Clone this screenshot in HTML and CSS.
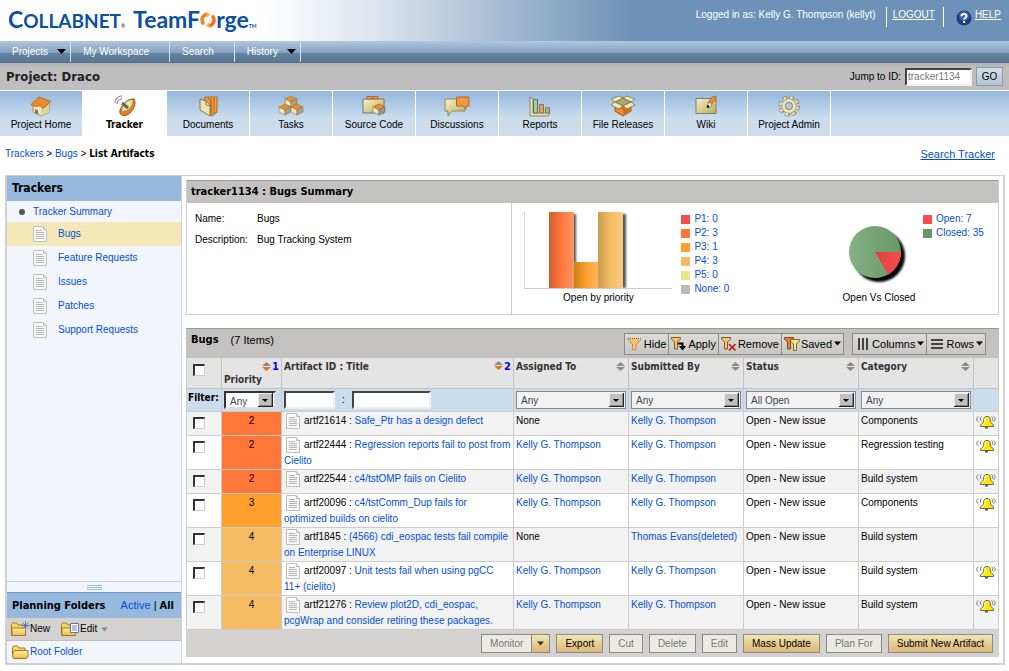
FILE: index.html
```html
<!DOCTYPE html>
<html lang="en">
<head>
<meta charset="utf-8">
<title>TeamForge: List Artifacts</title>
<link rel="stylesheet" href="styles.css">
</head>
<body>
<svg class="defs" width="0" height="0" aria-hidden="true">
  <defs>
    <linearGradient id="cream" x1="0" y1="0" x2="1" y2="1"><stop offset="0" stop-color="#f6f0c4"/><stop offset="1" stop-color="#b9ad62"/></linearGradient>
    <linearGradient id="gold" x1="0" y1="0" x2="0" y2="1"><stop offset="0" stop-color="#fff3a8"/><stop offset="1" stop-color="#eab94a"/></linearGradient>
    <symbol id="doc" viewBox="0 0 15 16">
      <path d="M.5.5h10l3 3v12H.5z" fill="#fafafa" stroke="#bdbdbd"/>
      <path d="M10.500.5v3h3" fill="#e8e8e8" stroke="#bdbdbd"/>
      <path d="M3 4.500h6M3 6.500h8M3 8.500h8M3 10.500h8M3 12.500h8" stroke="#b4b4b4"/>
    </symbol>
    <symbol id="bell" viewBox="0 0 20 14">
      <path d="M8 3 9.500 1.500h3L14 3l.5 4 3 3v1.500h-13V10l3-3z" fill="#ffe600" stroke="#6c6a58"/>
      <path d="M9 3v4.500l-3 3" fill="none" stroke="#fff"/>
      <path d="M9 12h3v1.500H9z" fill="#555"/>
      <path d="M2.500 7C0 5.500.2 3 2.500 1.500M5.500 6C4 5 4 3 5.500 1.500M17.500 7c2.300-2 2.100-4 0-5.500M16 6c1.300-1.500 1-3-.5-4.500" fill="none" stroke="#777"/>
    </symbol>
    <symbol id="sort" viewBox="0 0 9 9"><path d="M4.500 0 9 4H0z" fill="#8c8c8c"/><path d="M4.500 9 9 5H0z" fill="#8c8c8c"/></symbol>
    <symbol id="sorted" viewBox="0 0 9 9"><path d="M4.500 0 9 4H0z" fill="#8c8c8c"/><path d="M4.500 9 9 5H0z" fill="#e07818"/></symbol>
    <symbol id="down" viewBox="0 0 9 5"><path d="M0 0h9L4.500 5z" fill="currentColor"/></symbol>
  </defs>
</svg>

<header class="banner">
  <div class="logo" aria-label="CollabNet TeamForge">
    <span class="logo-collab"><span class="logo-cap">C</span>OLLABNET</span><span class="logo-mark">®</span>
    <span class="logo-forge">TeamF</span><svg class="logo-ring" viewBox="0 0 16 16"><path d="M7 2.200A5.800 5.800 0 0 0 4 12.300" fill="none" stroke="#f58220" stroke-width="3.400"/><path d="M9 13.800A5.800 5.800 0 0 0 12 3.700" fill="none" stroke="#f36f21" stroke-width="3.400"/><path d="M6.500 0 10.500 2.500 7 5.800zM9.500 16 5.500 13.500 9 10.200z" fill="#fdb63a"/></svg><span class="logo-forge">rge</span><span class="logo-mark">TM</span>
  </div>
  <div class="account">
    <span class="who">Logged in as: Kelly G. Thompson (kellyt)</span>
    <a class="logout" href="#">LOGOUT</a>
    <svg class="help-icon" viewBox="0 0 16 16"><circle cx="8" cy="8" r="7.500" fill="#1d3c80"/><circle cx="8" cy="6" r="5" fill="#3d62a8"/><path d="M5.500 6.200C5.500 3.300 10.600 3.300 10.600 6 10.600 7.800 8.100 7.700 8.100 9.600M8.100 11v2" fill="none" stroke="#fff" stroke-width="2"/></svg>
    <a href="#">HELP</a>
  </div>
</header>

<nav class="menu" aria-label="Site">
  <a class="has-menu" href="#">Projects <svg><use href="#down"/></svg></a>
  <a href="#">My Workspace</a>
  <a href="#">Search</a>
  <a class="has-menu" href="#">History <svg><use href="#down"/></svg></a>
</nav>

<div class="project-bar">
  <h1>Project: Draco</h1>
  <form class="jump">
    <label for="jump">Jump to ID:</label>
    <input id="jump" class="field" type="text" placeholder="tracker1134">
    <button type="button">GO</button>
  </form>
</div>

<nav class="tabs" aria-label="Project">
  <a href="#"><svg viewBox="0 0 22 22"><path d="M3 9v8l8 4 8-4V9L11 6z" fill="#f1e8b4" stroke="#a08a58"/><path d="M11 12v9l8-4V9z" fill="#ded49a"/><path d="M1 9.500 9 2l12 4.500-8 7-3-3-4 1z" fill="#f08a2c" stroke="#a96a2c"/><path d="M5 14l3 1.500v4L5 18z" fill="#777"/></svg>Project Home</a>
  <a class="current" href="#"><svg viewBox="0 0 22 22"><path d="M6 15C9 8 15 3 20 4c3 4-1 13-7 16-5 2-8-1-7-5z" fill="#e88024" stroke="#955018"/><path d="M7 17C8 9 15 3 19 5c1 5-4 12-12 12z" fill="#efe3a4" stroke="#b77a38"/><path d="M8 8l6 5" stroke="#666" stroke-width="3"/><path d="M1 8c0-4 3-7 7-7M3 9c0-3 2-5 5-5" fill="none" stroke="#777"/></svg>Tracker</a>
  <a href="#"><svg viewBox="0 0 22 22"><path d="M8 2h12v15l-5 4-9-6z" fill="#f39a42" stroke="#b0681f"/><path d="M17 3v16M14 3v17M11 3l3 4v12" stroke="#b0681f" fill="none"/><path d="M3 4l6 2 4 4v11L3 15z" fill="#ece4ae" stroke="#7e7a60"/><path d="M9 6v4l4 1" fill="none" stroke="#7e7a60"/></svg>Documents</a>
  <a href="#"><svg class="wide" viewBox="0 0 26 22"><g stroke="#8e7448" stroke-width=".6"><g id="box"><path d="M7 4l6-3 6 3-6 3z" fill="#f08a2c"/><path d="M7 4v5l6 3V7z" fill="#f1e8b4"/><path d="M19 4v5l-6 3V7z" fill="#aaa08a"/></g><use href="#box" x="-6" y="8"/><use href="#box" x="6" y="8"/></g></svg>Tasks</a>
  <a href="#"><svg class="wide" viewBox="0 0 26 22"><path d="M2 4h21v14H2z" fill="url(#cream)" stroke="#77776a"/><path d="M6 1.500h5V4H6zM12 1.500h5V4h-5z" fill="#f39a42" stroke="#a56a30"/><path d="M12 12l6-3 6 3-6 3z" fill="#f08a2c" stroke="#955018" stroke-width=".6"/><path d="M12 12v5l6 3v-5z" fill="#f1e8b4" stroke="#777" stroke-width=".6"/><path d="M24 12v5l-6 3v-5z" fill="#999" stroke="#666" stroke-width=".6"/></svg>Source Code</a>
  <a href="#"><svg class="wide" viewBox="0 0 26 22"><path d="M1 4h20v12H8l-4 5v-5H1z" fill="url(#cream)" stroke="#8a8668"/><path d="M12.500 2H25v9h-3v3l-3-3h-6.500z" fill="#f5943c" stroke="#a8692e"/></svg>Discussions</a>
  <a href="#"><svg viewBox="0 0 22 22"><path d="M1 2l3 2v14h17l-2 3H1z" fill="#ece4ae" stroke="#8a8668"/><path d="M4.500 4.500h4V18h-4z" fill="#a8d08a" stroke="#666"/><path d="M10.500 9.500h4V18h-4z" fill="#f09a42" stroke="#777"/><path d="M16.500 12.500h4V18h-4z" fill="#b9b36a" stroke="#777"/></svg>Reports</a>
  <a href="#"><svg class="wide" viewBox="0 0 26 22"><path d="M5 9l8 4 8-4v7l-8 5-8-5z" fill="#f08a2c" stroke="#955018"/><path d="M13 13v8l8-5V9z" fill="#d96f18"/><path d="M5 7l8-4 8 4-8 4z" fill="#b0a868" stroke="#77714a"/><path d="M5 7L1 4l8-3 4 2zM13 3l4-2 8 3-4 3zM5 7l8 4-4 3-8-4zM21 7l4 3-8 4-4-3z" fill="#f1e8b4" stroke="#77714a" stroke-width=".8"/></svg>File Releases</a>
  <a href="#"><svg viewBox="0 0 22 22"><path d="M1 3.500h20v15H1z" fill="url(#cream)" stroke="#7e7e70"/><path d="M13 8l4-6 4-1v3l-5 6z" fill="#f08a2c" stroke="#8a5020" stroke-width=".6"/><path d="M12 11l2-4 3 2-1 3-3 1z" fill="#eee" stroke="#555" stroke-width=".6"/><circle cx="13" cy="11.500" r="1.300"/></svg>Wiki</a>
  <a href="#"><svg viewBox="0 0 22 22"><circle cx="12" cy="11" r="8.500" fill="none" stroke="#d97c24" stroke-width="3" stroke-dasharray="3.800 2.880"/><circle cx="11" cy="11" r="8.500" fill="none" stroke="#888" stroke-width="4" stroke-dasharray="4.200 2.480"/><circle cx="11" cy="11" r="8.500" fill="none" stroke="#efe5b0" stroke-width="2.600" stroke-dasharray="2.800 3.880" stroke-dashoffset="-.7"/><circle cx="11" cy="11" r="5.200" fill="none" stroke="#888" stroke-width="4.600"/><circle cx="11" cy="11" r="5.400" fill="none" stroke="#efe5b0" stroke-width="3"/></svg>Project Admin</a>
</nav>

<div class="crumb-row">
  <div class="crumbs"><a href="#">Trackers</a> &gt; <a href="#">Bugs</a> &gt; <b>List Artifacts</b></div>
  <a class="search-link" href="#">Search Tracker</a>
</div>

<main class="frame">
  <aside class="sidebar">
    <h2 class="trackers">Trackers</h2>
    <ul class="tree">
      <li class="root"><a href="#">Tracker Summary</a></li>
      <li class="selected"><svg><use href="#doc"/></svg><a href="#">Bugs</a></li>
      <li><svg><use href="#doc"/></svg><a href="#">Feature Requests</a></li>
      <li><svg><use href="#doc"/></svg><a href="#">Issues</a></li>
      <li><svg><use href="#doc"/></svg><a href="#">Patches</a></li>
      <li><svg><use href="#doc"/></svg><a href="#">Support Requests</a></li>
    </ul>
    <div class="splitter"><span class="grip"></span></div>
    <div class="planning-head"><h2>Planning Folders</h2><span class="scope"><a href="#">Active</a> | <b>All</b></span></div>
    <div class="planning-tools">
      <button type="button"><svg class="folder" viewBox="0 0 19 16"><path d="M.500 14.500v-11l1-1.500h4l1.500 2h7v10.500z" fill="#f5d468" stroke="#a87818"/><path d="M1 14.500V7h13.500v7.500z" fill="url(#gold)" stroke="#a87818"/><path d="M14.500 0v9M10 4.500h9M11.500 1.500l6 6M17.500 1.500l-6 6" stroke="#5a74b8" stroke-width=".9"/></svg>New</button>
      <button type="button"><svg class="folder" viewBox="0 0 19 16"><path d="M.500 14.500v-11l1-1.500h4l1.500 2h7v10.500z" fill="#f5d468" stroke="#a87818"/><path d="M1 14.500V7h13.500v7.500z" fill="url(#gold)" stroke="#a87818"/><path d="M9.500 2.500h8v9h-8z" fill="#fff" stroke="#5a74b8"/><path d="M11 5h5M11 7h5M11 9h5" stroke="#5a74b8" stroke-width=".9"/></svg>Edit<svg class="caret"><use href="#down"/></svg></button>
    </div>
    <div class="planning-root"><svg class="folder" viewBox="0 0 17 14"><path d="M.500 11.500v-9l1-1.500h4l1.500 2h6v2.500" fill="#f5d468" stroke="#a87818"/><path d="M1.500 13.500C0 12 .500 6 3 5.500h13v6l-1.500 2z" fill="url(#gold)" stroke="#a87818"/></svg><a href="#">Root Folder</a></div>
  </aside>

  <section class="content">
    <section class="summary">
      <h2>tracker1134 : Bugs Summary</h2>
      <div class="summary-body">
        <dl class="facts">
          <dt>Name:</dt><dd>Bugs</dd>
          <dt>Description:</dt><dd>Bug Tracking System</dd>
        </dl>
        <div class="charts">
          <figure class="bars">
            <svg viewBox="0 0 148 80">
              <defs>
                <linearGradient id="p2"><stop offset="0" stop-color="#cf5f2f"/><stop offset=".5" stop-color="#ff7738"/><stop offset="1" stop-color="#ff9568"/></linearGradient>
                <linearGradient id="p3"><stop offset="0" stop-color="#c98018"/><stop offset=".5" stop-color="#ffa02c"/><stop offset="1" stop-color="#ffb45c"/></linearGradient>
                <linearGradient id="p4"><stop offset="0" stop-color="#c99c50"/><stop offset=".5" stop-color="#f6bc64"/><stop offset="1" stop-color="#f8ca84"/></linearGradient>
                <filter id="soft" x="-30%" y="-30%" width="160%" height="160%"><feGaussianBlur stdDeviation="1"/></filter>
              </defs>
              <path d="M.500 3v76" stroke="#bbb" stroke-dasharray="1 1"/>
              <path d="M27 5h25v74H27zM76 5h26v74H76z" fill="#555" filter="url(#soft)"/>
              <path d="M50 53h24v26H50z" fill="url(#p3)"/><path d="M25 3h25v76H25z" fill="url(#p2)"/><path d="M74 3h25v76H74z" fill="url(#p4)"/>
              <path d="M0 79.500h148" stroke="#ccc"/>
            </svg>
            <figcaption>Open by priority</figcaption>
          </figure>
          <ul class="legend">
            <li class="k1"><a href="#">P1: 0</a></li><li class="k2"><a href="#">P2: 3</a></li><li class="k3"><a href="#">P3: 1</a></li><li class="k4"><a href="#">P4: 3</a></li><li class="k5"><a href="#">P5: 0</a></li><li class="k0"><a href="#">None: 0</a></li>
          </ul>
          <figure class="pie">
            <svg viewBox="0 0 80 80">
              <defs>
                <linearGradient id="closed"><stop offset="0" stop-color="#85b085"/><stop offset="1" stop-color="#669866"/></linearGradient>
                <linearGradient id="open"><stop offset="0" stop-color="#e04040"/><stop offset="1" stop-color="#fb4c4c"/></linearGradient>
              </defs>
              <circle cx="40" cy="47" r="26" filter="url(#soft)"/>
              <circle cx="36" cy="43" r="26" fill="url(#closed)"/>
              <path d="M36 43h26a26 26 0 0 1-13 22.500z" fill="url(#open)"/>
            </svg>
            <figcaption>Open Vs Closed</figcaption>
          </figure>
          <ul class="legend last"><li class="k1"><a href="#">Open: 7</a></li><li class="kc"><a href="#">Closed: 35</a></li></ul>
        </div>
      </div>
    </section>

    <section class="list">
      <div class="list-head">
        <h2>Bugs</h2><span class="count">(7 Items)</span>
        <div class="tool-group">
          <button type="button"><svg viewBox="0 0 16 14"><path d="M1 1.500h12.500v1.500l-4.500 4v6h-3.500v-6l-4.500-4z" fill="#fbc46c" stroke="#7a5a30" stroke-dasharray="1 1"/></svg>Hide</button>
          <button type="button"><svg viewBox="0 0 16 14"><path d="M.500.500h9v1.500l-3 3v7h-3v-7l-3-3z" fill="#fbc46c" stroke="#7a5a30"/><path d="M7 6.500h4.500V10" fill="none" stroke="#000" stroke-width="2"/><path d="M8 9h7l-3.500 4.500z"/></svg>Apply</button>
          <button type="button"><svg viewBox="0 0 16 14"><path d="M.500.500h9v1.500l-3 3v7h-3v-7l-3-3z" fill="#fbc46c" stroke="#7a5a30"/><path d="M8 7l6.500 6.500M14.500 7 8 13.500" stroke="#c01818" stroke-width="1.600"/></svg>Remove</button>
          <button type="button"><svg viewBox="0 0 16 14"><path d="M.500.500h9v1.500l-3 3v7h-3v-7l-3-3z" fill="#f08030" stroke="#7a4a20"/><path d="M6.500 2.500h9V4l-3 3v6.500h-3V7l-3-3z" fill="#f4e48c" stroke="#7a6a30"/></svg>Saved<svg class="caret"><use href="#down"/></svg></button>
        </div>
        <div class="tool-group">
          <button type="button"><svg viewBox="0 0 16 14"><path d="M4 1v12M8 1v12M12 1v12" stroke="#444" stroke-width="2"/></svg>Columns<svg class="caret"><use href="#down"/></svg></button>
          <button type="button"><svg viewBox="0 0 16 14"><path d="M2 3h12M2 7h12M2 11h12" stroke="#444" stroke-width="2"/></svg>Rows<svg class="caret"><use href="#down"/></svg></button>
        </div>
      </div>
      <table>
        <colgroup><col class="c-check"><col class="c-pri"><col><col class="c-std"><col class="c-std"><col class="c-std"><col class="c-std"><col class="c-bell"></colgroup>
        <thead>
          <tr class="heads">
            <th><input type="checkbox" aria-label="Select all"></th>
            <th><span class="sort-line"><svg><use href="#sorted"/></svg><i>1</i></span>Priority</th>
            <th><span class="th-row">Artifact ID : Title <span><svg><use href="#sorted"/></svg><i>2</i></span></span></th>
            <th><span class="th-row">Assigned To <svg><use href="#sort"/></svg></span></th>
            <th><span class="th-row">Submitted By <svg><use href="#sort"/></svg></span></th>
            <th><span class="th-row">Status <svg><use href="#sort"/></svg></span></th>
            <th><span class="th-row">Category <svg><use href="#sort"/></svg></span></th>
            <th></th>
          </tr>
          <tr class="filters">
            <th class="filter-label">Filter:</th>
            <td><select class="active" aria-label="Priority"><option>Any</option></select></td>
            <td><span class="id-title"><input class="field id" type="text" aria-label="Artifact ID"> : <input class="field title" type="text" aria-label="Title"></span></td>
            <td><select aria-label="Assigned To"><option>Any</option></select></td>
            <td><select aria-label="Submitted By"><option>Any</option></select></td>
            <td><select aria-label="Status"><option>All Open</option></select></td>
            <td><select aria-label="Category"><option>Any</option></select></td>
            <td></td>
          </tr>
        </thead>
        <tbody>
          <tr><td><input type="checkbox" aria-label="artf21614"></td><td class="pri p2">2</td><td><svg class="doc"><use href="#doc"/></svg>artf21614 : <a href="#">Safe_Ptr has a design defect</a></td><td>None</td><td><a href="#">Kelly G. Thompson</a></td><td>Open - New issue</td><td>Components</td><td><svg class="bell"><use href="#bell"/></svg></td></tr>
          <tr><td><input type="checkbox" aria-label="artf22444"></td><td class="pri p2">2</td><td><svg class="doc"><use href="#doc"/></svg>artf22444 : <a href="#">Regression reports fail to post from Cielito</a></td><td><a href="#">Kelly G. Thompson</a></td><td><a href="#">Kelly G. Thompson</a></td><td>Open - New issue</td><td>Regression testing</td><td><svg class="bell"><use href="#bell"/></svg></td></tr>
          <tr><td><input type="checkbox" aria-label="artf22544"></td><td class="pri p2">2</td><td><svg class="doc"><use href="#doc"/></svg>artf22544 : <a href="#">c4/tstOMP fails on Cielito</a></td><td><a href="#">Kelly G. Thompson</a></td><td><a href="#">Kelly G. Thompson</a></td><td>Open - New issue</td><td>Build system</td><td><svg class="bell"><use href="#bell"/></svg></td></tr>
          <tr><td><input type="checkbox" aria-label="artf20096"></td><td class="pri p3">3</td><td><svg class="doc"><use href="#doc"/></svg>artf20096 : <a href="#">c4/tstComm_Dup fails for<br>optimized builds on cielito</a></td><td><a href="#">Kelly G. Thompson</a></td><td><a href="#">Kelly G. Thompson</a></td><td>Open - New issue</td><td>Components</td><td><svg class="bell"><use href="#bell"/></svg></td></tr>
          <tr><td><input type="checkbox" aria-label="artf1845"></td><td class="pri p4">4</td><td><svg class="doc"><use href="#doc"/></svg>artf1845 : <a href="#">(4566) cdi_eospac tests fail compile<br>on Enterprise LINUX</a></td><td>None</td><td><a href="#">Thomas Evans(deleted)</a></td><td>Open - New issue</td><td>Build system</td><td></td></tr>
          <tr><td><input type="checkbox" aria-label="artf20097"></td><td class="pri p4">4</td><td><svg class="doc"><use href="#doc"/></svg>artf20097 : <a href="#">Unit tests fail when using pgCC<br>11+ (cielito)</a></td><td><a href="#">Kelly G. Thompson</a></td><td><a href="#">Kelly G. Thompson</a></td><td>Open - New issue</td><td>Build system</td><td><svg class="bell"><use href="#bell"/></svg></td></tr>
          <tr><td><input type="checkbox" aria-label="artf21276"></td><td class="pri p4">4</td><td><svg class="doc"><use href="#doc"/></svg>artf21276 : <a href="#">Review plot2D, cdi_eospac,<br>pcgWrap and consider retiring these packages.</a></td><td><a href="#">Kelly G. Thompson</a></td><td><a href="#">Kelly G. Thompson</a></td><td>Open - New issue</td><td>Build system</td><td><svg class="bell"><use href="#bell"/></svg></td></tr>
        </tbody>
      </table>
      <div class="actions">
        <span class="split"><button type="button" disabled>Monitor</button><button class="more" type="button" aria-label="Monitor options"><svg class="caret"><use href="#down"/></svg></button></span>
        <button type="button">Export</button>
        <button type="button" disabled>Cut</button>
        <button type="button" disabled>Delete</button>
        <button type="button" disabled>Edit</button>
        <button type="button">Mass Update</button>
        <button type="button" disabled>Plan For</button>
        <button type="button">Submit New Artifact</button>
      </div>
    </section>
  </section>
</main>
</body>
</html>
```
FILE: styles.css
```css
* { box-sizing: border-box; }
body {
  margin: 0;
  background: #fff;
  color: #000;
  font: 10px/16px "Liberation Sans", Arial, sans-serif;
}
button, input, select { font: inherit; color: inherit; margin: 0; }
h1, h2, ul, dl, dd, figure { margin: 0; padding: 0; }
ul { list-style: none; }
a { color: #0050d8; text-decoration: none; }
svg { flex: none; }
.defs { position: absolute; }
h1, h2, b, th, .tabs .current { font-family: "DejaVu Sans Condensed", "DejaVu Sans", sans-serif; }
h2 { font-size: 11px; line-height: 22px; }

/* Banner */
.banner {
  display: flex;
  justify-content: space-between;
  height: 41px;
  background: linear-gradient(90deg, #fff 260px, #dfe6ee 370px, #6e92b7 630px);
}
.logo {
  display: flex;
  align-items: baseline;
  padding: 4px 0 0 8px;
  color: #0a519f;
  font: 700 23px/30px Lato, sans-serif;
}
.logo-collab { font-size: 19px; }
.logo-cap { font-size: 23px; }
.logo-mark { font-size: 5px; }
.logo-mark + .logo-forge { margin-left: 8px; }
.logo-ring { width: 16px; height: 16px; }
.account { display: flex; align-items: flex-start; padding: 7px 8px 0 0; color: #fff; }
.account a { color: #fff; text-decoration: underline; }
.account .who { padding-right: 10px; }
.account .logout { padding: 0 8px 0 6px; margin-right: 12px; border: solid #fff; border-width: 0 1px; height: 20px; }
.help-icon { width: 16px; height: 16px; margin: 3px 3px 0 0; }

/* Site menu */
.menu {
  display: flex;
  height: 22px;
  border-bottom: 1px solid #4d72a5;
  background: linear-gradient(#b0c7df, #84a2c0 55%, #64829f 60%, #5c7690);
}
.menu a {
  display: flex;
  align-items: center;
  gap: 9px;
  padding: 0 20px 0 12px;
  border-right: 1px solid #d5e1ee;
  color: #fff;
}
.menu .has-menu { padding-right: 4px; }
.menu svg { width: 9px; height: 5px; color: #000; }

/* Project bar */
.project-bar {
  display: flex;
  align-items: center;
  justify-content: space-between;
  height: 27px;
  padding: 0 6px;
  background: linear-gradient(#b0b0b0, #bebebe 4px);
}
.project-bar h1 { font-size: 13px; color: #222; }
.jump { display: flex; align-items: center; gap: 4px; }
.field {
  height: 18px;
  padding: 0 1px;
  border: 2px solid;
  border-color: #444 #eee #eee #444;
  background: #fff;
}
.jump .field { width: 67px; }
.field::placeholder { color: #777; opacity: 1; }
.jump button {
  width: 27px;
  height: 19px;
  padding: 0;
  border: 1px solid #8d99a8;
  background: linear-gradient(#d4dfeb, #b4c4d6);
}

/* Project tabs */
.tabs {
  display: flex;
  height: 46px;
  border-top: 1px solid #fff;
  background: linear-gradient(#94b7de, #cbdcec 60%, #cdddec);
}
.tabs a {
  display: flex;
  flex-direction: column;
  align-items: center;
  width: 83px;
  padding-top: 4px;
  border-right: 1px solid #fff;
  color: #000;
}
.tabs svg { width: 22px; height: 22px; }
.tabs svg.wide { width: 26px; }
.tabs .current { width: 84px; background: #fff; font-weight: bold; }

.crumb-row {
  display: flex;
  justify-content: space-between;
  padding: 10px 14px 13px 5px;
}
.search-link { text-decoration: underline; font-size: 11px; }

/* Framed page body */
.frame {
  display: flex;
  margin: 0 4px 7px 5px;
  border: solid #d0d0d0;
  border-width: 1px 2px 2px;
}
.sidebar {
  display: flex;
  flex-direction: column;
  width: 175px;
  border-right: 1px solid #ccd0dc;
  background: #f2f5fb;
}
.sidebar h2 { padding-left: 5px; line-height: 25px; background: #98b9de; }
.sidebar .trackers { font-size: 12px; }
.tree { flex: 1; }
.tree li { display: flex; align-items: center; gap: 10px; height: 24px; padding-left: 26px; }
.tree svg { width: 15px; height: 16px; }
.tree .root { height: 21px; padding-left: 12px; gap: 8px; }
.tree .root::before { content: ""; width: 6px; height: 6px; border-radius: 50%; background: #555; }
.tree .selected { background: #f4e8b8; }
.splitter { display: flex; justify-content: center; align-items: center; height: 11px; border-top: 1px solid #ccd0dc; }
.grip { width: 15px; height: 5px; border: solid #98b9de; border-width: 1px 0; background: linear-gradient(#fff 1px, #98b9de 1px, #98b9de 2px, #fff 2px); }
.planning-head { display: flex; align-items: center; justify-content: space-between; padding-right: 7px; border-top: 1px solid #6f9cc8; background: #98b9de; }
.scope { font-size: 11px; }
.planning-tools { display: flex; align-items: center; gap: 11px; height: 23px; padding-left: 4px; border-bottom: 1px solid #c0c0c0; background: #d3d2d0; }
.planning-tools button { display: flex; align-items: center; padding: 0; border: 0; background: none; }
.folder { width: 19px; height: 16px; }
.planning-tools .caret { margin-left: 4px; color: #888; }
.planning-root { display: flex; align-items: center; height: 22px; padding-left: 5px; }
.planning-root .folder { width: 17px; height: 14px; margin-right: 1px; }
.caret { width: 7px; height: 5px; }

.content { flex: 1; min-width: 0; padding: 4px 4px 6px; }
.summary { border: 1px solid #ccc; border-top-color: #999; margin-bottom: 13px; }
.summary h2 { padding-left: 4px; background: #c3c2c0; }
.summary-body { display: flex; min-height: 111px; }
.facts { display: grid; grid-template-columns: 62px 1fr; align-content: start; row-gap: 5px; width: 40%; padding: 8px; }
.charts { display: flex; flex: 1; padding-left: 12px; border-left: 1px solid #ccc; }
figure { text-align: center; }
figure svg { display: block; }
figcaption { padding-top: 1px; }
.bars { width: 148px; padding-top: 6px; }
.bars svg { width: 148px; height: 80px; }
.pie { width: 80px; margin-left: auto; padding-top: 6px; }
.pie svg { width: 80px; height: 80px; }
.legend { padding: 9px 0 0 9px; }
.legend.last { width: 79px; padding-left: 4px; }
.legend li { display: flex; align-items: center; gap: 4px; height: 14px; white-space: nowrap; }
.legend li::before { content: ""; width: 9px; height: 9px; }
.k0::before { background: #bbb; }
.k1::before { background: #fb4c4c; }
.k2::before { background: #ff7738; }
.k3::before { background: #ffa02c; }
.k4::before { background: #f6bc64; }
.k5::before { background: #eee480; }
.kc::before { background: #669866; }

/* Artifact list */
.list-head {
  display: flex;
  align-items: center;
  height: 30px;
  padding: 0 13px 0 5px;
  border-top: 1px solid #999;
  background: #c3c2c0;
}
.count { flex: 1; padding-left: 12px; font-size: 11px; }
.list-head h2, .count { padding-bottom: 8px; }
.tool-group { display: flex; margin-left: 8px; border: solid #8a8a86; border-width: 1px 0 1px 1px; }
.tool-group button {
  display: flex;
  align-items: center;
  height: 20px;
  padding: 0 2px;
  border: 0;
  border-right: 1px solid #8a8a86;
  background: linear-gradient(#dcdbd8, #c9c7c3);
  font-size: 11px;
}
.tool-group svg { width: 16px; height: 14px; margin-right: 1px; }
.tool-group .caret { width: 7px; height: 5px; margin: 0 0 0 2px; }

table { width: 100%; table-layout: fixed; border-collapse: separate; border-spacing: 0; border-left: 1px solid #ccc; }
.c-check { width: 35px; }
.c-pri { width: 60px; }
.c-std { width: 115px; }
.c-bell { width: 25px; }
th, td { padding: 1px 2px 0; border: solid #ccc; border-width: 0 1px 1px 0; text-align: left; vertical-align: top; }
.heads th { height: 31px; padding-top: 2px; border-color: #c3c2c0; background: #e4e4e4; color: #333; line-height: 13px; }
.heads svg { width: 9px; height: 9px; }
.heads i { color: #00e; font-size: 11px; font-style: normal; padding-left: 1px; }
.th-row, .sort-line { display: flex; justify-content: space-between; }
.heads th .th-row > svg { margin: 2px 1px 0 0; }
.sort-line { justify-content: flex-end; align-items: center; }
.filters th, .filters td { height: 23px; padding-top: 2px; background: #cbdcec; line-height: 18px; }
.filters .filter-label { padding: 0 0 0 1px; }
td input[type="checkbox"], th input[type="checkbox"] {
  display: block;
  appearance: none;
  width: 12px;
  height: 12px;
  margin: 4px 0 0 4px;
  border: solid;
  border-width: 2px 1px 1px 2px;
  border-color: #333 #ccc #ccc #333;
  background: #fff;
}
tbody td { height: 24px; background: #fff; }
tbody tr:nth-child(odd) td { background: #f2f2f2; }
tbody td:last-child { padding-right: 0; }
tbody tr .pri { text-align: center; }
tbody tr .pri.p2 { background: #ff7738; }
tbody tr .pri.p3 { background: #ffa02c; }
tbody tr .pri.p4 { background: #f6bc64; }
.doc { width: 15px; height: 16px; margin: 0 3px 0 2px; vertical-align: top; }
.bell { display: block; width: 20px; height: 14px; margin-top: 2px; }
select {
  display: block;
  appearance: none;
  width: 100%;
  height: 18px;
  padding: 0 18px 0 4px;
  border: 1px solid #888;
  border-radius: 0;
  color: #444;
  background: #f2f2f2 url("data:image/svg+xml,%3Csvg xmlns='http://www.w3.org/2000/svg' width='15' height='14'%3E%3Cpath d='M0 0h15v14H0z' fill='%23222'/%3E%3Cpath d='M0 0h14v13H0z' fill='%23eee'/%3E%3Cpath d='M1 1h13v12H1z' fill='%23888'/%3E%3Cpath d='M1 1h12v11H1z' fill='%23c0c0c0'/%3E%3Cpath d='M4 6h6l-3 3z'/%3E%3C/svg%3E") right 1px center no-repeat;
}
select.active { border: 2px solid; border-color: #333 #ddd #ddd #333; width: 52px; background-color: #fff; }
.id-title { display: flex; gap: 7px; }
.id-title .id { width: 51px; }
.id-title .title { width: 79px; }

.actions { display: flex; justify-content: flex-end; gap: 6px; padding: 4px 6px; background: #d3d2d0; }
.actions button {
  height: 19px;
  padding: 0 8px;
  border: 1px solid #8a8a86;
  background: linear-gradient(#f0e8b8, #e8cc90 50%, #dcb87c);
}
.actions button:disabled { background: #ecebe2; color: #777; }
.split { display: flex; }
.actions .more { padding: 0 5px; border-left: 0; color: #333; }
.actions .caret { display: block; }
```
